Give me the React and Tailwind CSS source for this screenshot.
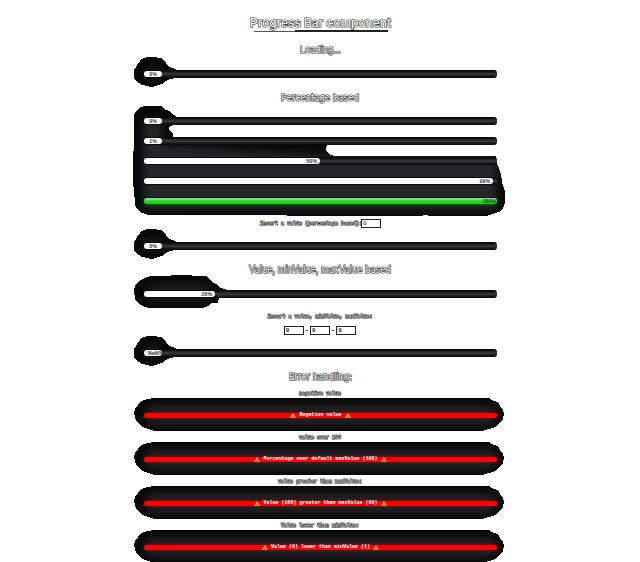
import React, { useId } from "react";

const MONO = "font-['Liberation_Mono',monospace]";

function Heading({ children, className, width }) {
  return (
    <svg width={width} height="16" className={`mr-px block shrink-0 overflow-visible font-['Inter',sans-serif] ${className}`}>
      <text x="0" y="11" textLength={width} lengthAdjust="spacingAndGlyphs" fill="#fff" stroke="#222" strokeWidth="1.2" paintOrder="stroke">
        {children}
      </text>
    </svg>
  );
}

function Halo({ d, children }) {
  const id = useId();
  return (
    <svg className="pointer-events-none absolute left-0 top-0 -z-10 overflow-visible" width="354" height="8">
      <defs>
        <filter id={`${id}-soft`} x="-20%" y="-100%" width="140%" height="300%">
          <feGaussianBlur stdDeviation="4" />
        </filter>
        <clipPath id={`${id}-shape`}>
          <path d={d} />
        </clipPath>
      </defs>
      <path d={d} fill="#080808" shapeRendering="crispEdges" />
      <g clipPath={`url(#${id}-shape)`}>
        <g filter={`url(#${id}-soft)`}>{children}</g>
      </g>
    </svg>
  );
}

const SMALL_HALO =
  "M-10 -1L-8-2L-7-6L-4-8L-3-11L1-12L3-13L12-13L14-12L18-12L19-10L22-7L24-4L28-2L32-1L32 8L26 9L22 11L18 14L14 15L9 17L6 17L4 16L-2 15L-5 13L-8 11L-10 8Z";
const WIDE_HALO =
  "M-10 0L-9-4L-6-8L-3-10L1-12L6-14L47-15L48-14L62-14L65-12L67-9L72-6L75-3L80-1L84 0L84 7L75 8L74 13L68 13L64 16L58 18L4 18L-1 16L-6 13L-9 9Z";
const GROUP_HALO =
  "M-10 0L-9-5L-6-8L-3-10L1-11L17-11L20-8L25-6L28-3L32-1L32 7L26 9L25 12L27 15L29 17L29 28L183 28L182 33L185 37L190 39L352 39L353 47L355 51L357 57L358 65L361 75L361 86L359 91L355 95L345 98L342 99L286 99L281 98L276 99L4 98L-2 96L-6 93L-9 88L-10 72L-11 68L-11 38L-10 30Z";
const ERROR_HALO =
  "M-10 0L-9-4L-6-8L-3-12L3-14L10-15L345-15L350-12L354-11L356-7L359-3L360 1L359 6L356 9L351 14L345 16L338 18L10 18L1 15L-4 12L-8 8Z";

function Bar({ label, fill = "w-[18px]", color = "bg-white", className = "mt-3", align = "justify-center", halo }) {
  return (
    <div
      className={`relative h-2 w-[353px] shrink-0 rounded-[3px] bg-linear-to-b from-[#080808] from-10% via-[#3c3c3e] via-50% to-[#0b0b0d] to-90% ${className}`}
    >
      {halo}
      <div className="pt-[1px]">
        <div className={`flex h-[5.5px] items-center rounded-[3px] ${align} ${fill} ${color}`}>
          <span className="pt-[1px] font-['Liberation_Sans',sans-serif] text-[5.2px] leading-none font-bold text-[#333]">
            {label}
          </span>
        </div>
      </div>
    </div>
  );
}

function Field({ className = "" }) {
  return (
    <span className={`flex h-[9px] w-5 items-center border border-[#222] bg-white pt-px pl-[1px] text-[6px] leading-none text-[#222] ${className}`}>
      0
    </span>
  );
}

function Caption({ children, className = "" }) {
  return (
    <div className={`mr-px whitespace-nowrap text-[5px] leading-[8px] font-bold text-[#ccc] [-webkit-text-stroke:0.9px_#111] [paint-order:stroke_fill] ${className}`}>
      {children}
    </div>
  );
}

function Warn() {
  return (
    <svg width="6" height="5.5" viewBox="0 0 12 11" className="shrink-0">
      <path d="M6 1L11 10H1Z" fill="#b35a18" stroke="#eba645" strokeWidth="1.8" strokeLinejoin="round" />
      <path d="M6 4V7M6 8V9" stroke="#ffe3a0" strokeWidth="1.2" />
    </svg>
  );
}

const ERRORS = [
  ["negative value", "Negative value"],
  ["value over 100", "Percentage over default maxValue (100)"],
  ["value greater than maxValue:", "Value (100) greater than maxValue (99)"],
  ["Value lower than minValue:", "Value (0) lower than minValue (1)"],
];

function ErrorItem({ caption, message }) {
  return (
    <div className="flex h-11 shrink-0 flex-col items-center">
      <Caption>{caption}</Caption>
      <div className="relative mt-[15px] flex h-[5px] w-[353px] items-center justify-center gap-[3px] rounded-full bg-[#fb0000] shadow-[0_0_3px_#b00000]">
        <Halo d={ERROR_HALO}>
          <rect x="2" y="-8" width="350" height="20" rx="9" fill="#242426" />
        </Halo>
        <Warn />
        <span className="whitespace-nowrap text-[5px] leading-none font-bold text-white">{message}</span>
        <Warn />
      </div>
    </div>
  );
}

export default function App() {
  const smallHalo = (
    <Halo d={SMALL_HALO}>
      <ellipse cx="9" cy="3" rx="10" ry="6" fill="#1c1c1c" />
    </Halo>
  );
  return (
    <div className={`isolate flex h-[562px] w-[640px] flex-col items-center overflow-hidden bg-white pt-4 pl-px ${MONO}`}>
      <div className="flex h-4 shrink-0 flex-col items-center">
        <Heading width={141} className="text-[12px] font-medium">Progress Bar component</Heading>
        <div className="-mt-[2px] flex w-[134px] items-start">
          <div className="mt-px h-px w-[41px] bg-[#555]" />
          <div className="h-[1.5px] flex-1 bg-[#222]" />
        </div>
      </div>

      <Heading width={41} className="mt-[10px] text-[9.5px]">Loading...</Heading>
      <Bar label="0%" className="mt-3" halo={smallHalo} />

      <Heading width={78} className="mt-3 text-[9.5px]">Percentage based</Heading>
      <Bar
        label="0%"
        className="mt-[11px]"
        halo={
          <Halo d={GROUP_HALO}>
            <path d="M0 2H18V28L170 38H352V92H0Z" fill="#28282a" />
          </Halo>
        }
      />
      <Bar label="1%" />
      <Bar label="50%" fill="w-[176px] pr-[3px]" align="justify-end" />
      <Bar label="99%" fill="w-[349px] pr-[3px]" align="justify-end" />
      <Bar
        label="100%"
        fill="w-[353px] pr-[1px] shadow-[0_1px_3px_#087a08]"
        align="justify-end"
        color="bg-linear-to-b from-[#a0cba0] from-15% via-[#16df16] via-45% to-[#10dc10]"
      />

      <div className="mt-[13px] flex h-[11px] shrink-0 items-center">
        <Caption>insert a value (percentage based):</Caption>
        <Field className="-ml-[2px]" />
      </div>
      <Bar label="0%" className="mt-[13px]" halo={smallHalo} />

      <Heading width={142} className="mt-3 text-[10px]">Value, minValue, maxValue based</Heading>
      <Bar
        label="20%"
        fill="w-[71px] pr-[3px]"
        align="justify-end"
        halo={
          <Halo d={WIDE_HALO}>
            <rect x="2" y="-6" width="66" height="18" rx="9" fill="#1c1c1e" />
          </Halo>
        }
      />

      <Caption className="mt-[15px]">insert a value, minValue, maxValue:</Caption>
      <div className="mt-[5px] mr-px flex h-[9px] shrink-0 items-center gap-[1px] text-[7px] leading-none font-bold text-[#222]">
        <Field />
        <span>-</span>
        <Field />
        <span>-</span>
        <Field />
      </div>
      <Bar label="NaN%" fill="w-[18px] pl-[4px]" align="justify-start" className="mt-[14px]" halo={smallHalo} />

      <Heading width={63} className="mt-3 text-[9.5px]">Error handling:</Heading>
      <div className="mt-[5px] shrink-0">
        {ERRORS.map(([caption, message]) => (
          <ErrorItem key={message} caption={caption} message={message} />
        ))}
      </div>
    </div>
  );
}
